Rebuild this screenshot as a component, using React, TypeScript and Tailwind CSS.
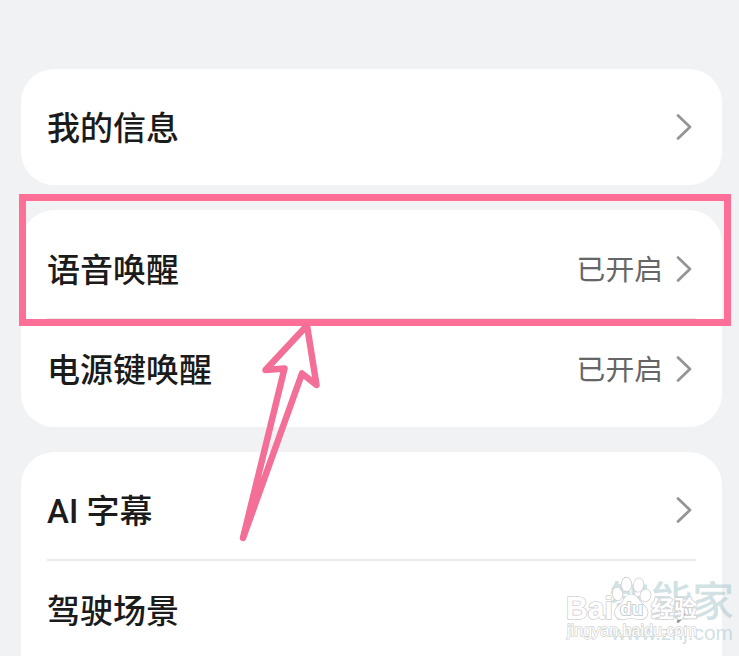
type RowProps = {
  label: string;
  value?: string;
  divider?: boolean;
};

function Chevron() {
  return (
    <svg className="h-[28px] w-[16px] shrink-0" viewBox="0 0 16 28" fill="none" aria-hidden="true">
      <path d="M2 2.5 14 14 2 25.5" stroke="#949494" strokeWidth="2.7" strokeLinecap="round" strokeLinejoin="round" />
    </svg>
  );
}

function SettingRow({ label, value, divider }: RowProps) {
  return (
    <li
      className={[
        'flex h-[100px] items-center justify-between',
        divider ? 'border-b-2 border-[#ebebec]' : 'border-b-2 border-transparent',
      ].join(' ')}
    >
      <span className="pt-0.5 text-[33px] leading-none font-medium whitespace-nowrap text-[#1b1b1b]">{label}</span>
      <span className="flex items-center gap-[13px] pr-[4px]">
        {value && <span className="pt-[3px] text-[28.8px] leading-none text-[#666]">{value}</span>}
        <Chevron />
      </span>
    </li>
  );
}

function Watermarks() {
  return (
    <div className="pointer-events-none absolute top-[570px] left-[560px] h-[86px] w-[179px]" aria-hidden="true">
      <svg className="size-full" viewBox="560 570 179 86">
        <g fill="#a9c8cd" fillOpacity="0.55">
          <text x="609" y="616" fontSize="41" fontWeight="500" textLength="125" lengthAdjust="spacingAndGlyphs">
            智能家
          </text>
          <text x="611" y="640" fontSize="21" textLength="122" lengthAdjust="spacingAndGlyphs" fontFamily="Liberation Sans, sans-serif">
            www.znj.com
          </text>
        </g>
        <g fill="#fff" stroke="#d2d2d2" strokeWidth="1.7" strokeLinejoin="round" style={{ paintOrder: 'stroke' }}>
          <text x="566" y="619" fontSize="31.5" fontWeight="700" textLength="47" lengthAdjust="spacingAndGlyphs" fontFamily="Liberation Sans, sans-serif">
            Bai
          </text>
          <ellipse cx="617.5" cy="594" rx="4.8" ry="6.3" transform="rotate(-12 617.5 594)" />
          <ellipse cx="626.5" cy="584.5" rx="4.8" ry="6.8" />
          <ellipse cx="638.5" cy="585" rx="4.8" ry="6.8" transform="rotate(8 638.5 585)" />
          <ellipse cx="645.5" cy="595.5" rx="5" ry="6" transform="rotate(20 645.5 595.5)" />
          <path d="M631 594.5c5 0 7 4 10 8s6.5 5 6.5 10-4 7.5-9 6.5-10-1-14 0-9.5-1-9.5-6.5 4-6 7-10 4-8 9-8Z" />
          <text x="620" y="615" fontSize="18" textLength="23" lengthAdjust="spacingAndGlyphs" fontWeight="700" stroke="#b9c9cc" fontFamily="Liberation Sans, sans-serif">
            du
          </text>
          <text x="651" y="617" fontSize="23" fontWeight="700" textLength="46" lengthAdjust="spacingAndGlyphs">
            经验
          </text>
          <text x="567" y="636" fontSize="16.5" textLength="130" lengthAdjust="spacingAndGlyphs" strokeWidth="1.4" fontFamily="Liberation Sans, sans-serif">
            jingyan.baidu.com
          </text>
        </g>
      </svg>
    </div>
  );
}

export default function App() {
  return (
    <main className="relative h-[657px] w-[739px] overflow-hidden bg-white font-[Roboto,'Noto_Sans_CJK_SC',sans-serif]">
      <div className="flex h-[656px] flex-col gap-[25px] overflow-hidden bg-[#f0f2f4] pt-[69px] pr-[17px] pl-[21px]">
        <ul className="h-[116px] shrink-0 rounded-[33px] bg-white px-[26px] pt-[9px]">
          <SettingRow label="我的信息" />
        </ul>
        <ul className="h-[217px] shrink-0 rounded-[33px] bg-white px-[26px] pt-[10px]">
          <SettingRow label="语音唤醒" value="已开启" divider />
          <SettingRow label="电源键唤醒" value="已开启" />
        </ul>
        <ul className="h-[260px] shrink-0 rounded-[33px] bg-white px-[26px] pt-[9px]">
          <SettingRow label="AI 字幕" divider />
          <SettingRow label="驾驶场景" />
        </ul>
      </div>

      <Watermarks />

      <div className="absolute top-[194px] left-[19px] h-[132px] w-[712px] border-[7px] border-[#fd6f97]" />
      <svg className="absolute top-[315px] left-[230px] h-[235px] w-[100px]" viewBox="230 315 100 235" aria-hidden="true">
        <path
          d="M243 538 284.5 368.5 265.5 370 307 325.5 316.5 385 302 373.5Z"
          fill="none"
          stroke="#f36f97"
          strokeWidth="6.5"
          strokeLinejoin="round"
        />
      </svg>
    </main>
  );
}
